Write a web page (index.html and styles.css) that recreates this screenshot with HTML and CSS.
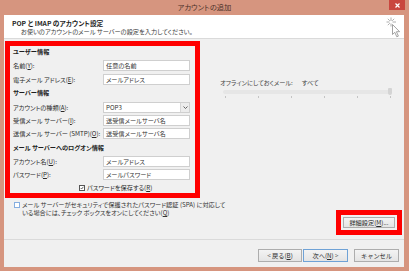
FILE: index.html
```html
<!DOCTYPE html>
<html lang="ja">
<head>
    <meta charset="UTF-8">
    <title>アカウントの追加</title>
    <link rel="stylesheet" href="styles.css">
</head>
<body>
<div class="window">
    <div class="titlebar">
        <span class="title">アカウントの追加</span>
        <span class="close">
            <svg width="5" height="5" viewBox="0 0 5 5"><path d="M0.5 0.5L4.5 4.5M4.5 0.5L0.5 4.5" stroke="#fff" stroke-width="1.2"/></svg>
        </span>
    </div>
    <div class="client">
        <div class="header">
            <div class="header-text">
                <p class="header-title">POP と IMAP のアカウント設定</p>
                <p class="header-sub">お使いのアカウントのメール サーバーの設定を入力してください。</p>
            </div>
            <svg class="header-icon" width="16" height="21" viewBox="0 0 16 21">
                <g stroke="#9a9a9a" stroke-width="0.8">
                    <path d="M6 0.5V4M6 6.5V9.5M1.5 5H4.5M7.5 5H11M2.8 1.8L4.8 3.8M9.2 1.8L7.2 3.8M2.8 8.2L4.8 6.2"/>
                </g>
                <path d="M7.5 7.5V17.5L9.8 15.3L11.8 19.8L13.4 19.1L11.4 14.7H14.6Z" fill="#fff" stroke="#8c8c8c" stroke-width="0.8" stroke-linejoin="round"/>
            </svg>
        </div>

        <div class="content">
            <div class="left">
                <div class="mark settings">
                    <div class="group user">
                        <p class="group-title">ユーザー情報</p>
                        <div class="row"><span>名前(<u>Y</u>):</span><span class="field">任意の名前</span></div>
                        <div class="row"><span>電子メール アドレス(<u>E</u>):</span><span class="field">メールアドレス</span></div>
                    </div>
                    <div class="group server">
                        <p class="group-title">サーバー情報</p>
                        <div class="row">
                            <span>アカウントの種類(<u>A</u>):</span>
                            <span class="field select">POP3
                                <span class="arrow"><svg width="5" height="3" viewBox="0 0 5 3"><path d="M0.5 0.5L2.5 2.5L4.5 0.5" fill="none" stroke="#555" stroke-width="0.9"/></svg></span>
                            </span>
                        </div>
                        <div class="row"><span>受信メール サーバー(<u>I</u>):</span><span class="field">送受信メールサーバ名</span></div>
                        <div class="row"><span>送信メール サーバー (SMTP)(<u>O</u>):</span><span class="field">送受信メールサーバ名</span></div>
                    </div>
                    <div class="group logon">
                        <p class="group-title">メール サーバーへのログオン情報</p>
                        <div class="row"><span>アカウント名(<u>U</u>):</span><span class="field">メールアドレス</span></div>
                        <div class="row"><span>パスワード(<u>P</u>):</span><span class="field">メールパスワード</span></div>
                    </div>
                    <div class="save">
                        <span class="checkbox checked">
                            <svg width="6" height="6" viewBox="0 0 6 6"><path d="M1 3L2.5 4.5L5 1.2" fill="none" stroke="#222" stroke-width="1"/></svg>
                        </span>
                        <span>パスワードを保存する(<u>R</u>)</span>
                    </div>
                </div>

                <div class="spa">
                    <span class="checkbox blue"></span>
                    <p>メール サーバーがセキュリティで保護されたパスワード認証 (SPA) に対応して<br>いる場合には、チェック ボックスをオンにしてください(<u>Q</u>)</p>
                </div>
            </div>

            <div class="right">
                <div class="offline">
                    <p><span>オフラインにしておくメール:</span><span class="offline-value">すべて</span></p>
                    <div class="track"><span class="thumb"></span></div>
                    <div class="ticks">
                        <span></span><span></span><span></span><span></span><span></span><span></span>
                    </div>
                </div>
                <div class="mark advanced">
                    <button class="button wide">詳細設定(<u>M</u>)...</button>
                </div>
            </div>
        </div>

        <div class="footer">
            <button class="button back">&lt; 戻る(<u>B</u>)</button>
            <button class="button next">次へ(<u>N</u>) &gt;</button>
            <button class="button cancel">キャンセル</button>
        </div>
    </div>
</div>
</body>
</html>
```

FILE: styles.css
```css
* {
    box-sizing: border-box;
}
body {
    margin: 0;
    font-family: "Noto Sans CJK JP", "Noto Sans", sans-serif;
    font-feature-settings: "palt";
    font-size: 6.2px;
    line-height: 8px;
    color: #2a2a2a;
}
p {
    margin: 0;
}
u {
    text-decoration-thickness: 0.5px;
}
.window {
    width: 409px;
    height: 271px;
    background: #d6957f;
    display: flex;
    flex-direction: column;
    padding: 0 5px 4px 4px;
}
.titlebar {
    height: 15px;
    margin: 0 -5px 0 -4px;
    display: grid;
    grid-template-columns: 1fr auto 1fr;
}
.title {
    grid-column: 2;
    font-size: 7.3px;
    line-height: 15px;
    color: #4a3029;
}
.close {
    grid-column: 3;
    justify-self: end;
    width: 16px;
    height: 10px;
    margin-right: 4px;
    background: #c9473f;
    display: flex;
    align-items: center;
    justify-content: center;
}
.close svg {
    display: block;
}
.client {
    flex: 1;
    background: #f0f0f0;
    display: flex;
    flex-direction: column;
}
.header {
    height: 24px;
    background: #fff;
    border-bottom: 1px solid #dadada;
    display: flex;
    justify-content: space-between;
    padding: 2px 3px 0 8px;
}
.header-text {
    padding-top: 3px;
}
.header-title {
    font-weight: bold;
    font-size: 6.7px;
    line-height: 7px;
    color: #1e1e1e;
}
.header-sub {
    margin-top: 1px;
    padding-left: 9px;
    color: #3a3a3a;
}
.header-icon {
    display: block;
}
.content {
    flex: 1;
    display: flex;
}
.left {
    width: 196px;
    display: flex;
    flex-direction: column;
}
.mark {
    border: 5px solid #ff0000;
}
.settings {
    margin: 2px 0 0 1px;
    width: 195px;
    height: 157px;
    padding: 0 5px 0 3px;
}
.group-title {
    height: 12px;
    line-height: 12px;
    font-weight: bold;
    color: #1e1e1e;
}
.row {
    height: 13px;
    display: grid;
    grid-template-columns: 90px 87px;
    align-items: center;
    white-space: nowrap;
}
.user .row {
    margin-top: 1px;
}
.server {
    margin-top: 1px;
}
.server .group-title {
    margin-bottom: 2px;
}
.logon {
    margin-top: 2px;
}
.logon .group-title {
    margin-bottom: 1px;
}
.field {
    height: 11px;
    background: #fff;
    border: 1px solid #cfcfcf;
    padding-left: 2px;
    line-height: 9px;
    color: #333;
    display: flex;
    align-items: center;
}
.select {
    justify-content: space-between;
    padding-right: 0;
}
.arrow {
    width: 9px;
    height: 9px;
    background: #ececec;
    border-left: 1px solid #d6d6d6;
    display: flex;
    align-items: center;
    justify-content: center;
}
.arrow svg {
    display: block;
}
.save {
    margin-top: 2px;
    height: 10px;
    display: flex;
    align-items: center;
    gap: 2px;
    padding-left: 66px;
}
.checkbox {
    width: 6px;
    height: 6px;
    background: #fff;
    border: 1px solid #555;
    display: flex;
    align-items: center;
    justify-content: center;
    flex: none;
}
.checkbox svg {
    display: block;
}
.checkbox.blue {
    border-color: #86aee0;
    margin-top: 1px;
}
.spa {
    margin-top: 3px;
    padding-left: 10px;
    display: flex;
    align-items: flex-start;
    gap: 2px;
    white-space: nowrap;
    color: #333;
}
.right {
    flex: 1;
    display: flex;
    flex-direction: column;
}
.offline {
    margin-top: 40px;
    padding-left: 20px;
    color: #444;
}
.offline-value {
    margin-left: 9px;
}
.track {
    position: relative;
    margin: 3px 0 0 3px;
    width: 169px;
    height: 4px;
    background: #e6e6e6;
    border-radius: 2px;
}
.thumb {
    position: absolute;
    right: 0;
    top: -2px;
    width: 4px;
    height: 7px;
    background: #d4d4d4;
    border-radius: 1px 1px 2px 2px;
}
.ticks {
    margin: 2px 0 0 5px;
    width: 166px;
    display: flex;
    justify-content: space-between;
}
.ticks span {
    width: 1px;
    height: 2px;
    background: #c4c4c4;
}
.advanced {
    margin: auto 2px 4px 0;
    align-self: flex-end;
    padding: 2px;
}
.button {
    height: 13px;
    padding: 0;
    font-family: inherit;
    font-size: 6.2px;
    line-height: 11px;
    color: #2a2a2a;
    background: linear-gradient(#f3f3f3, #e4e4e4);
    border: 1px solid #adadad;
}
.wide {
    width: 52px;
    height: 11px;
    line-height: 9px;
}
.footer {
    height: 28px;
    border-top: 1px solid #dadada;
    display: flex;
    justify-content: flex-end;
    padding: 9px 5px 0 0;
}
.back {
    width: 44px;
}
.next {
    width: 45px;
    margin-left: 1px;
    border-color: #6fa2d6;
}
.cancel {
    width: 45px;
    margin-left: 6px;
}
```
